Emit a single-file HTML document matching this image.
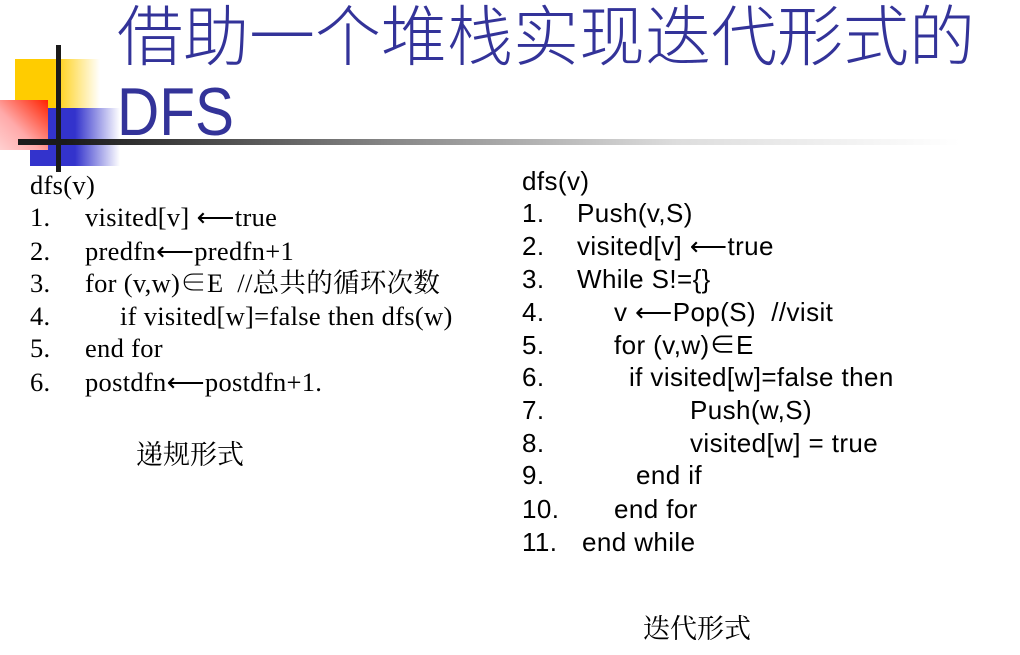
<!DOCTYPE html>
<html><head><meta charset="utf-8"><style>
body{margin:0;width:1020px;height:655px;background:#fff;position:relative;overflow:hidden}
.a{position:absolute;white-space:pre;line-height:1}
.t{color:#333399;font-family:"Liberation Sans","Noto Sans CJK SC",sans-serif;font-size:66px;font-weight:300}
.s{font-family:"Liberation Serif","Noto Serif CJK SC",serif;font-size:26.5px;letter-spacing:0.3px;color:#000}
.r{font-family:"Liberation Sans","Noto Sans CJK SC",sans-serif;font-size:26px;letter-spacing:0.4px;color:#000}
.c{font-size:27px;letter-spacing:0}
</style></head><body>
<div class="a" style="left:15px;top:59px;width:85px;height:52px;background:linear-gradient(90deg,#ffcc00 45%,#fff)"></div>
<div class="a" style="left:30px;top:108px;width:90px;height:58px;background:linear-gradient(90deg,#3333cc 50%,#fff)"></div>
<div class="a" style="left:0;top:100px;width:48px;height:50px;background:linear-gradient(225deg,#ff2200,#ffaaaa 60%,#ffd0d0)"></div>
<div class="a" style="left:56px;top:45px;width:5px;height:127px;background:#1a1a1a"></div>
<div class="a" style="left:18px;top:139px;width:942px;height:6px;background:linear-gradient(90deg,#1a1a1a 5%,#888 40%,#ddd 70%,#fff)"></div>
<div class="a t" style="left:117px;top:4px">借助一个堆栈实现迭代形式的</div>
<div class="a t" style="left:117px;top:78px;font-size:68px;transform:scaleX(0.86);transform-origin:left">DFS</div>

<div class="a s" style="left:30px;top:172px">dfs(v)</div>
<div class="a s" style="left:30px;top:204px">1.</div><div class="a s" style="left:85px;top:204px">visited[v] ⟵true</div>
<div class="a s" style="left:30px;top:238px">2.</div><div class="a s" style="left:85px;top:238px">predfn⟵predfn+1</div>
<div class="a s" style="left:30px;top:270px">3.</div><div class="a s" style="left:85px;top:270px">for (v,w)∈E  //总共的循环次数</div>
<div class="a s" style="left:30px;top:303px">4.</div><div class="a s" style="left:120px;top:303px">if visited[w]=false then dfs(w)</div>
<div class="a s" style="left:30px;top:335px">5.</div><div class="a s" style="left:85px;top:335px">end for</div>
<div class="a s" style="left:30px;top:369px">6.</div><div class="a s" style="left:85px;top:369px">postdfn⟵postdfn+1.</div>
<div class="a s c" style="left:136px;top:442px">递规形式</div>

<div class="a r" style="left:522px;top:168px">dfs(v)</div>
<div class="a r" style="left:522px;top:200px">1.</div><div class="a r" style="left:577px;top:200px">Push(v,S)</div>
<div class="a r" style="left:522px;top:233px">2.</div><div class="a r" style="left:577px;top:233px">visited[v] ⟵true</div>
<div class="a r" style="left:522px;top:266px">3.</div><div class="a r" style="left:577px;top:266px">While S!={}</div>
<div class="a r" style="left:522px;top:299px">4.</div><div class="a r" style="left:614px;top:299px">v ⟵Pop(S)  //visit</div>
<div class="a r" style="left:522px;top:332px">5.</div><div class="a r" style="left:614px;top:332px">for (v,w)∈E</div>
<div class="a r" style="left:522px;top:364px">6.</div><div class="a r" style="left:629px;top:364px">if visited[w]=false then</div>
<div class="a r" style="left:522px;top:397px">7.</div><div class="a r" style="left:690px;top:397px">Push(w,S)</div>
<div class="a r" style="left:522px;top:430px">8.</div><div class="a r" style="left:690px;top:430px">visited[w] = true</div>
<div class="a r" style="left:522px;top:462px">9.</div><div class="a r" style="left:636px;top:462px">end if</div>
<div class="a r" style="left:522px;top:496px">10.</div><div class="a r" style="left:614px;top:496px">end for</div>
<div class="a r" style="left:522px;top:529px">11.</div><div class="a r" style="left:582px;top:529px">end while</div>
<div class="a s c" style="left:643px;top:616px">迭代形式</div>
</body></html>
